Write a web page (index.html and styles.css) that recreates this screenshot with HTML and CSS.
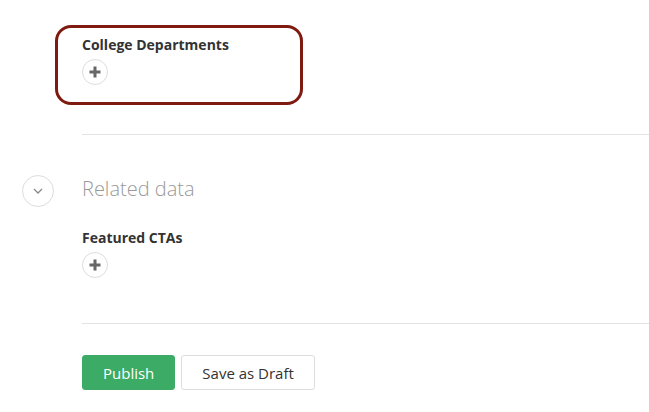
FILE: index.html
```html
<!DOCTYPE html>
<html lang="en">
<head>
    <meta charset="UTF-8">
    <title>Edit page</title>
    <link rel="stylesheet" href="styles.css">
</head>
<body>
    <div class="page">
        <div class="field highlighted">
            <label class="field-label">College Departments</label>
            <button class="add-btn" aria-label="Add">
                <svg width="12" height="12" viewBox="0 0 12 12"><path d="M6 0.5v11M0.5 6h11" stroke="#666" stroke-width="3"/></svg>
            </button>
        </div>

        <hr class="divider first">

        <div class="section-head">
            <div class="gutter">
                <button class="toggle" aria-label="Collapse">
                    <svg width="10" height="6" viewBox="0 0 10 6"><path d="M1 1l4 4 4-4" fill="none" stroke="#888" stroke-width="1.3"/></svg>
                </button>
            </div>
            <h2 class="section-title">Related data</h2>
        </div>

        <div class="field">
            <label class="field-label">Featured CTAs</label>
            <button class="add-btn" aria-label="Add">
                <svg width="12" height="12" viewBox="0 0 12 12"><path d="M6 0.5v11M0.5 6h11" stroke="#666" stroke-width="3"/></svg>
            </button>
        </div>

        <hr class="divider second">

        <div class="actions">
            <button class="btn btn-primary">Publish</button>
            <button class="btn btn-default">Save as Draft</button>
        </div>
    </div>
</body>
</html>
```

FILE: styles.css
```css
body {
    margin: 0;
    font-family: 'Open Sans', 'Noto Sans', sans-serif;
    color: #333;
    background-color: #fff;
    overflow: hidden;
}
.page {
    padding-top: 35px;
}
.field {
    margin-left: 82px;
}
.highlighted {
    position: relative;
}
.highlighted::after {
    content: "";
    position: absolute;
    left: -27px;
    top: -10px;
    width: 242px;
    height: 74px;
    border: 3px solid #7e1a10;
    border-radius: 16px;
}
.field-label {
    display: block;
    font-size: 14px;
    font-weight: 700;
    line-height: 20px;
    color: #333;
}
.add-btn {
    display: flex;
    align-items: center;
    justify-content: center;
    width: 26px;
    height: 26px;
    margin-top: 4px;
    padding: 0;
    border: 1px solid #ddd;
    border-radius: 50%;
    background: #fff;
    cursor: pointer;
}
.divider {
    margin: 0 0 0 82px;
    border: none;
    border-top: 1px solid #e3e3e3;
}
.divider.first {
    margin-top: 49px;
}
.divider.second {
    margin-top: 45px;
}
.section-head {
    display: flex;
    align-items: center;
    margin-top: 40px;
    height: 32px;
}
.gutter {
    width: 82px;
    padding-left: 22px;
    box-sizing: border-box;
}
.toggle {
    display: flex;
    align-items: center;
    justify-content: center;
    width: 32px;
    height: 32px;
    padding: 0;
    border: 1px solid #ddd;
    border-radius: 50%;
    background: #fff;
    cursor: pointer;
}
.section-title {
    margin: 0 0 4px;
    font-size: 20px;
    font-weight: 300;
    line-height: 26px;
    color: #999;
}
.section-head + .field {
    margin-top: 21px;
}
.actions {
    display: flex;
    gap: 6px;
    margin: 31px 0 0 82px;
}
.btn {
    height: 35px;
    padding: 0 20px;
    font-family: inherit;
    font-size: 15px;
    border-radius: 3px;
    cursor: pointer;
}
.btn-primary {
    background-color: #3bab65;
    border: 1px solid #3bab65;
    color: #fff;
}
.btn-default {
    background-color: #fff;
    border: 1px solid #ddd;
    color: #333;
}
```
